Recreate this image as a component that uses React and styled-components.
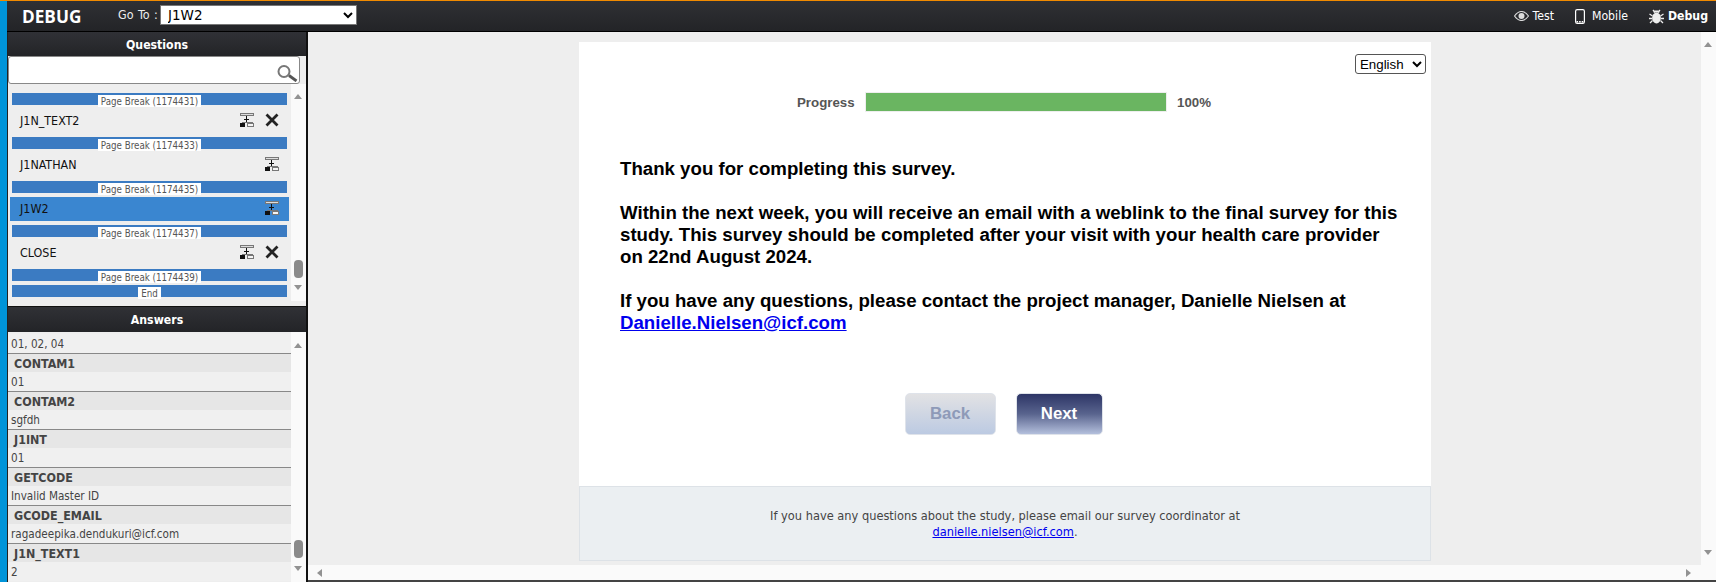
import React from "react";
import styled, { createGlobalStyle } from "styled-components";

const questions = [
  { type: "break", label: "Page Break (1174431)" },
  { type: "item", label: "J1N_TEXT2", remove: true },
  { type: "break", label: "Page Break (1174433)" },
  { type: "item", label: "J1NATHAN" },
  { type: "break", label: "Page Break (1174435)" },
  { type: "item", label: "J1W2", active: true },
  { type: "break", label: "Page Break (1174437)" },
  { type: "item", label: "CLOSE", remove: true },
  { type: "break", label: "Page Break (1174439)" },
  { type: "break", label: "End" },
];

const answers = [
  ["CONTAM1", "01"],
  ["CONTAM2", "sgfdh"],
  ["J1INT", "01"],
  ["GETCODE", "Invalid Master ID"],
  ["GCODE_EMAIL", "ragadeepika.dendukuri@icf.com"],
  ["J1N_TEXT1", "2"],
];

const TreeIcon = () => (
  <svg width="14" height="14" viewBox="0 0 14 14" shapeRendering="crispEdges">
    <rect x="0.5" y="0.5" width="13" height="2" fill="#ddd" stroke="#777" strokeWidth="1" />
    <path d="M2 10V9h10v1" fill="none" stroke="#777" strokeWidth="1" />
    <path d="M6 3h1v6H6zM4 6h5v1H4z" fill="#111" />
    <rect x="0" y="10" width="5" height="4" fill="#111" />
    <rect x="7.500" y="10.500" width="6" height="3" fill="#f4f4f4" stroke="#777" strokeWidth="1" />
  </svg>
);

const CrossIcon = () => (
  <svg width="14" height="14" viewBox="0 0 14 14">
    <path d="M1.500 1.500l11 11M12.500 1.500l-11 11" stroke="#222" strokeWidth="2.800" />
  </svg>
);

const SearchIcon = () => (
  <svg width="21" height="17" viewBox="0 0 21 17">
    <circle cx="7" cy="6.500" r="5.500" fill="#fff" stroke="#777" strokeWidth="2" />
    <path d="M12 10.500l7.500 5.500" stroke="#555" strokeWidth="2.800" />
  </svg>
);

const EyeIcon = () => (
  <svg width="15" height="10" viewBox="0 0 15 10">
    <path d="M0.500 5C3 1.500 5 0.500 7.500 0.500S12 1.500 14.500 5C12 8.500 10 9.500 7.500 9.500S3 8.500 0.500 5z" fill="none" stroke="#ddd" strokeWidth="1.100" />
    <circle cx="7.500" cy="5" r="3" fill="#ddd" />
  </svg>
);

const PhoneIcon = () => (
  <svg width="10" height="15" viewBox="0 0 10 15">
    <rect x="0.600" y="0.600" width="8.800" height="13.800" rx="1.600" fill="none" stroke="#fff" strokeWidth="1.200" />
    <path d="M1.500 12.800h7" stroke="#fff" strokeWidth="1.400" strokeDasharray="1.600 1" />
  </svg>
);

const BugIcon = () => (
  <svg width="15" height="15" viewBox="0 0 15 15">
    <ellipse cx="7.500" cy="9" rx="4.400" ry="5.400" fill="#eee" />
    <path d="M4.500 3.500h6L9.500 1.500h-4z" fill="#eee" />
    <path d="M4 1l2 2.500M11 1L9 3.500M0.500 5l3 2M14.500 5l-3 2M0 9.500h3M15 9.500h-3M1 14l2.500-2.500M14 14l-2.500-2.500" stroke="#eee" strokeWidth="1.300" />
  </svg>
);

const App = () => (
  <>
    <GlobalStyle />
    <Page>
      <Strip />
      <Shell>
        <TopBar>
          <Logo>DEBUG</Logo>
          <GoToLabel>Go To :</GoToLabel>
          <GoTo defaultValue="J1W2">
            <option>J1W2</option>
          </GoTo>
          <TopLinks>
            <TopLink $gap={4}>
              <EyeIcon />
              Test
            </TopLink>
            <TopLink $gap={7} $low>
              <PhoneIcon />
              Mobile
            </TopLink>
            <TopLink $gap={4} $low $bold>
              <BugIcon />
              Debug
            </TopLink>
          </TopLinks>
        </TopBar>
        <Body>
          <Sidebar>
            <PanelHeading>Questions</PanelHeading>
            <SearchBox>
              <SearchIcon />
            </SearchBox>
            <QuestionPane>
              <QuestionList>
                {questions.map((q) =>
                  q.type === "break" ? (
                    <BreakBar key={q.label}>
                      <BreakLabel>{q.label}</BreakLabel>
                    </BreakBar>
                  ) : (
                    <QuestionRow key={q.label} $active={q.active}>
                      <QuestionName>{q.label}</QuestionName>
                      <IconSlot>
                        <TreeIcon />
                      </IconSlot>
                      {q.remove && (
                        <IconSlot $cross>
                          <CrossIcon />
                        </IconSlot>
                      )}
                    </QuestionRow>
                  ),
                )}
              </QuestionList>
              <QuestionTrack>
                <ArrowUp $offset={10} />
                <Thumb $top={176} />
                <ArrowDown $offset={11} />
              </QuestionTrack>
            </QuestionPane>
            <PanelHeading $answers>Answers</PanelHeading>
            <AnswerPane>
              <AnswerList>
                <AnswerValue>01, 02, 04</AnswerValue>
                {answers.map(([name, value]) => (
                  <React.Fragment key={name}>
                    <AnswerName>{name}</AnswerName>
                    <AnswerValue>{value}</AnswerValue>
                  </React.Fragment>
                ))}
              </AnswerList>
              <ScrollTrack>
                <ArrowUp $offset={11} />
                <Thumb $top={208} />
                <ArrowDown $offset={11} />
              </ScrollTrack>
            </AnswerPane>
          </Sidebar>
          <Main>
            <MainRow>
              <Canvas>
                <Card>
                  <CardBody>
                    <LangRow>
                      <LangSelect defaultValue="English">
                        <option>English</option>
                      </LangSelect>
                    </LangRow>
                    <ProgressRow>
                      <ProgressLabel>Progress</ProgressLabel>
                      <ProgressTrack>
                        <ProgressFill style={{ width: "100%" }} />
                      </ProgressTrack>
                      <ProgressValue>100%</ProgressValue>
                    </ProgressRow>
                    <Message>
                      <p>Thank you for completing this survey.</p>
                      <p>
                        Within the next week, you will receive an email with a weblink to the final survey for this
                        study. This survey should be completed after your visit with your health care provider on 22nd
                        August 2024.
                      </p>
                      <p>
                        If you have any questions, please contact the project manager, Danielle Nielsen at{" "}
                        <a href="#mail">Danielle.Nielsen@icf.com</a>
                      </p>
                    </Message>
                    <Buttons>
                      <NavButton $back>Back</NavButton>
                      <NavButton>Next</NavButton>
                    </Buttons>
                  </CardBody>
                  <CardFooter>
                    If you have any questions about the study, please email our survey coordinator at
                    <br />
                    <a href="#mail">danielle.nielsen@icf.com</a>.
                  </CardFooter>
                </Card>
              </Canvas>
              <ScrollTrack>
                <ArrowUp $offset={10} />
                <ArrowDown $offset={10} />
              </ScrollTrack>
            </MainRow>
            <HScroll>
              <ArrowLeft />
              <ArrowRight />
            </HScroll>
          </Main>
        </Body>
      </Shell>
    </Page>
  </>
);

export default App;

const condensed = `
  font-family: "DejaVu Sans Condensed", "DejaVu Sans", sans-serif;
  font-stretch: condensed;
`;

const GlobalStyle = createGlobalStyle`
  html, body {
    margin: 0;
    padding: 0;
    height: 582px;
    overflow: hidden;
    font-family: "Liberation Sans", Arial, sans-serif;
  }
`;

const Page = styled.div`
  width: 1716px;
  height: 582px;
  display: flex;
  background: #eee;
`;

const Strip = styled.div`
  width: 7px;
  flex: none;
  background: #0094d9;
  border-top: 1px solid #f08a00;
`;

const Shell = styled.div`
  flex: 1;
  min-width: 0;
  display: flex;
  flex-direction: column;
`;

const TopBar = styled.div`
  height: 32px;
  flex: none;
  box-sizing: border-box;
  border-top: 1px solid #f08a00;
  border-bottom: 1px solid #000;
  background: linear-gradient(#2f3034, #232427);
  display: flex;
  align-items: center;
  color: #fff;
`;

const Logo = styled.div`
  width: 111px;
  flex: none;
  padding-left: 15px;
  box-sizing: border-box;
  font-size: 17.200px;
  font-weight: bold;
  font-family: "Open Sans", sans-serif;
`;

const GoToLabel = styled.div`
  ${condensed}
  width: 42px;
  flex: none;
  margin-bottom: 3px;
  font-size: 12.400px;
  word-spacing: 1px;
  color: #eee;
`;

const GoTo = styled.select`
  width: 197px;
  height: 20px;
  margin-bottom: 2px;
  font-size: 13.500px;
  font-family: "DejaVu Sans", sans-serif;
  background: #fff;
  border: 1px solid #777;
  padding: 0 0 0 3px;
`;

const TopLinks = styled.div`
  margin-left: auto;
  display: flex;
  align-items: center;
  gap: 21px;
  padding-right: 8px;
`;

const TopLink = styled.div`
  ${condensed}
  display: flex;
  align-items: center;
  gap: ${(p) => p.$gap}px;
  font-size: 12.200px;
  font-weight: ${(p) => (p.$bold ? "bold" : "normal")};
  margin-bottom: ${(p) => (p.$low ? "0" : "1px")};
`;

const Body = styled.div`
  flex: 1;
  min-height: 0;
  display: flex;
`;

const Sidebar = styled.div`
  width: 301px;
  flex: none;
  box-sizing: border-box;
  border-left: 1px solid #222;
  border-right: 2px solid #111;
  display: flex;
  flex-direction: column;
  background: #eee;
`;

const PanelHeading = styled.div`
  ${condensed}
  height: ${(p) => (p.$answers ? "26px" : "24px")};
  flex: none;
  display: flex;
  align-items: center;
  justify-content: center;
  background: linear-gradient(#303136, #232427);
  border-top: ${(p) => (p.$answers ? "1px solid #111" : "none")};
  box-sizing: border-box;
  padding-top: 1px;
  color: #fff;
  font-size: 12.200px;
  font-weight: bold;
`;

const SearchBox = styled.div`
  height: 28px;
  margin-right: 6px;
  flex: none;
  box-sizing: border-box;
  background: #fff;
  border: 1px solid #888;
  border-radius: 3px;
  display: flex;
  justify-content: flex-end;
  align-items: flex-end;
  padding: 0 1px 1px 0;
`;

const QuestionPane = styled.div`
  height: 222px;
  flex: none;
  display: flex;
`;

const QuestionList = styled.div`
  flex: 1;
  min-width: 0;
  padding-top: 9px;
`;

const BreakBar = styled.div`
  height: 12px;
  margin: 0 4px 4px;
  background: #3b7bc2;
  display: flex;
  justify-content: center;
`;

const BreakLabel = styled.span`
  ${condensed}
  height: 12px;
  margin-top: 2px;
  padding: 0 3px;
  background: #fff;
  color: #555;
  font-size: 9.700px;
  line-height: 14px;
  white-space: nowrap;
`;

const QuestionRow = styled.div`
  height: 24px;
  box-sizing: border-box;
  margin: ${(p) => (p.$active ? "0 2px 4px" : "0 4px 4px")};
  background: ${(p) => (p.$active ? "#3a86d0" : "transparent")};
  display: flex;
  align-items: center;
  padding: 0 ${(p) => (p.$active ? "10px" : "8px")} 2px;
`;

const QuestionName = styled.span`
  ${condensed}
  flex: 1;
  font-size: 12.400px;
  color: #111;
`;

const IconSlot = styled.span`
  display: flex;
  margin-left: ${(p) => (p.$cross ? "11px" : "0")};
`;

const ScrollTrack = styled.div`
  width: 15px;
  flex: none;
  background: #fafafa;
  position: relative;
`;

const QuestionTrack = styled(ScrollTrack)`
  height: 217px;
`;

const ArrowUp = styled.div`
  position: absolute;
  top: ${(p) => p.$offset}px;
  left: 3px;
  border: 4.500px solid transparent;
  border-top: none;
  border-bottom: 5px solid #929292;
`;

const ArrowDown = styled.div`
  position: absolute;
  bottom: ${(p) => p.$offset}px;
  left: 3px;
  border: 4.500px solid transparent;
  border-bottom: none;
  border-top: 5px solid #929292;
`;

const ArrowLeft = styled.div`
  border: 4.500px solid transparent;
  border-left: none;
  border-right: 5px solid #929292;
`;

const ArrowRight = styled.div`
  border: 4.500px solid transparent;
  border-right: none;
  border-left: 5px solid #929292;
`;

const Thumb = styled.div`
  position: absolute;
  left: 3px;
  top: ${(p) => p.$top}px;
  width: 9px;
  height: 18px;
  border-radius: 4px;
  background: #8a8a8a;
`;

const AnswerPane = styled.div`
  flex: 1;
  min-height: 0;
  display: flex;
  overflow: hidden;
`;

const AnswerList = styled.div`
  flex: 1;
  min-width: 0;
  padding-top: 2px;
`;

const AnswerName = styled.div`
  ${condensed}
  height: 18px;
  border-top: 1px solid #888;
  background: #e6e6e6;
  padding-left: 6px;
  font-size: 12.400px;
  font-weight: bold;
  line-height: 20px;
  color: #444;
`;

const AnswerValue = styled.div`
  ${condensed}
  height: 19px;
  font-size: 11.600px;
  line-height: 21px;
  padding-left: 3px;
  color: #444;
  background: #f0f0f0;
  white-space: nowrap;
`;

const Main = styled.div`
  flex: 1;
  min-width: 0;
  display: flex;
  flex-direction: column;
  border-bottom: 2px solid #444;
`;

const MainRow = styled.div`
  flex: 1;
  min-height: 0;
  display: flex;
`;

const Canvas = styled.div`
  flex: 1;
  display: flex;
  justify-content: center;
  padding-top: 10px;
  padding-left: 2px;
  padding-right: 1px;
  background: #eee;
`;

const Card = styled.div`
  width: 852px;
  height: 519px;
  background: #fff;
  display: flex;
  flex-direction: column;
`;

const CardBody = styled.div`
  flex: 1;
  padding: 12px 5px 0 0;
  display: flex;
  flex-direction: column;
`;

const LangRow = styled.div`
  display: flex;
  justify-content: flex-end;
`;

const LangSelect = styled.select`
  width: 71px;
  height: 20px;
  font-size: 13.300px;
  font-family: "Liberation Sans", sans-serif;
  background: #fff;
  border: 1px solid #555;
  border-radius: 3px;
`;

const ProgressRow = styled.div`
  display: flex;
  align-items: center;
  margin-top: 18px;
  padding-left: 218px;
  color: #555;
  font-size: 13.300px;
  font-weight: bold;
`;

const ProgressLabel = styled.span`
  width: 68px;
`;

const ProgressTrack = styled.div`
  width: 302px;
  height: 20px;
  box-sizing: border-box;
  border: 1px solid #eee;
  background: #fff;
`;

const ProgressFill = styled.div`
  height: 100%;
  background: #6ab561;
`;

const ProgressValue = styled.span`
  margin-left: 10px;
`;

const Message = styled.div`
  margin: 46px 26px 0 41px;
  color: #000;
  font-size: 18.660px;
  font-weight: bold;
  line-height: 22px;

  p {
    margin: 0 0 22px;
  }

  a {
    color: #00e;
    text-decoration: underline;
  }
`;

const Buttons = styled.div`
  display: flex;
  justify-content: center;
  gap: 20px;
  margin-top: 37px;
  padding-left: 2px;
`;

const NavButton = styled.div`
  width: ${(p) => (p.$back ? "91px" : "87px")};
  height: 42px;
  box-sizing: border-box;
  border: 1px solid #dfe3ea;
  border-radius: 5px;
  display: flex;
  align-items: center;
  justify-content: center;
  font-size: 16.800px;
  font-weight: bold;
  color: ${(p) => (p.$back ? "#8e9ab8" : "#fff")};
  background: ${(p) =>
    p.$back ? "linear-gradient(#e2e2e4, #bccae2)" : "linear-gradient(#2d3566, #59648e 50%, #b3bfdc)"};
`;

const CardFooter = styled.div`
  ${condensed}
  height: 75px;
  flex: none;
  box-sizing: border-box;
  background: #ebeff2;
  border: 1px solid #dde2e7;
  padding-top: 21px;
  text-align: center;
  font-size: 12.700px;
  line-height: 16px;
  color: #444;

  a {
    color: #00e;
    text-decoration: underline;
  }
`;

const HScroll = styled.div`
  height: 15px;
  flex: none;
  background: #fafafa;
  display: flex;
  align-items: center;
  justify-content: space-between;
  padding: 0 25px 0 9px;
`;
